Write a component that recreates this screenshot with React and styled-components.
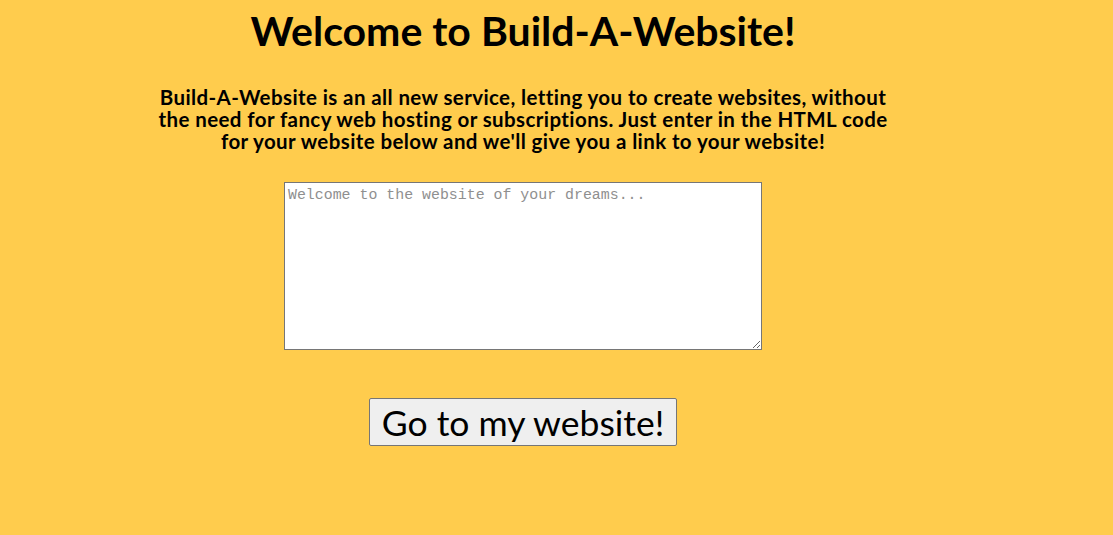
import React from "react";
import styled, { createGlobalStyle } from "styled-components";

const GlobalStyle = createGlobalStyle`
  body {
    margin: 0;
    background: #ffcc4d;
    font-family: Lato, "Open Sans", sans-serif;
  }
`;

const Page = styled.div`
  width: 1046px;
  min-height: 535px;
  display: flex;
  flex-direction: column;
  align-items: center;
`;

const Title = styled.h1`
  margin: 6px 0 0;
  font-size: 41px;
  font-weight: 700;
  line-height: 50px;
  color: #000;
`;

const Intro = styled.p`
  margin: 30px 0 0;
  width: 760px;
  font-size: 20.5px;
  font-weight: 700;
  letter-spacing: 0.4px;
  line-height: 22px;
  text-align: center;
  color: #000;
`;

const CodeBox = styled.textarea`
  box-sizing: border-box;
  margin-top: 30px;
  width: 478px;
  height: 168px;
  padding: 4px 3px;
  border: 1px solid #767676;
  font-family: "Liberation Mono", monospace;
  font-size: 14.9px;
  background: #fff;
  resize: both;
  &::placeholder {
    color: #8f8f8f;
  }
`;

const GoButton = styled.button`
  box-sizing: border-box;
  margin-top: 48px;
  width: 308px;
  height: 48px;
  padding: 0;
  font-family: Lato, "Open Sans", sans-serif;
  font-size: 35.5px;
  color: #000;
  background: #efefef;
  border: 1px solid #767676;
  border-radius: 2px;
  cursor: pointer;
`;

export default function App() {
  return (
    <>
      <GlobalStyle />
      <Page>
        <Title>Welcome to Build-A-Website!</Title>
        <Intro>
          Build-A-Website is an all new service, letting you to create websites,
          without
          <br />
          the need for fancy web hosting or subscriptions. Just enter in the
          HTML code
          <br />
          for your website below and we'll give you a link to your website!
        </Intro>
        <CodeBox placeholder="Welcome to the website of your dreams..." />
        <GoButton>Go to my website!</GoButton>
      </Page>
    </>
  );
}
